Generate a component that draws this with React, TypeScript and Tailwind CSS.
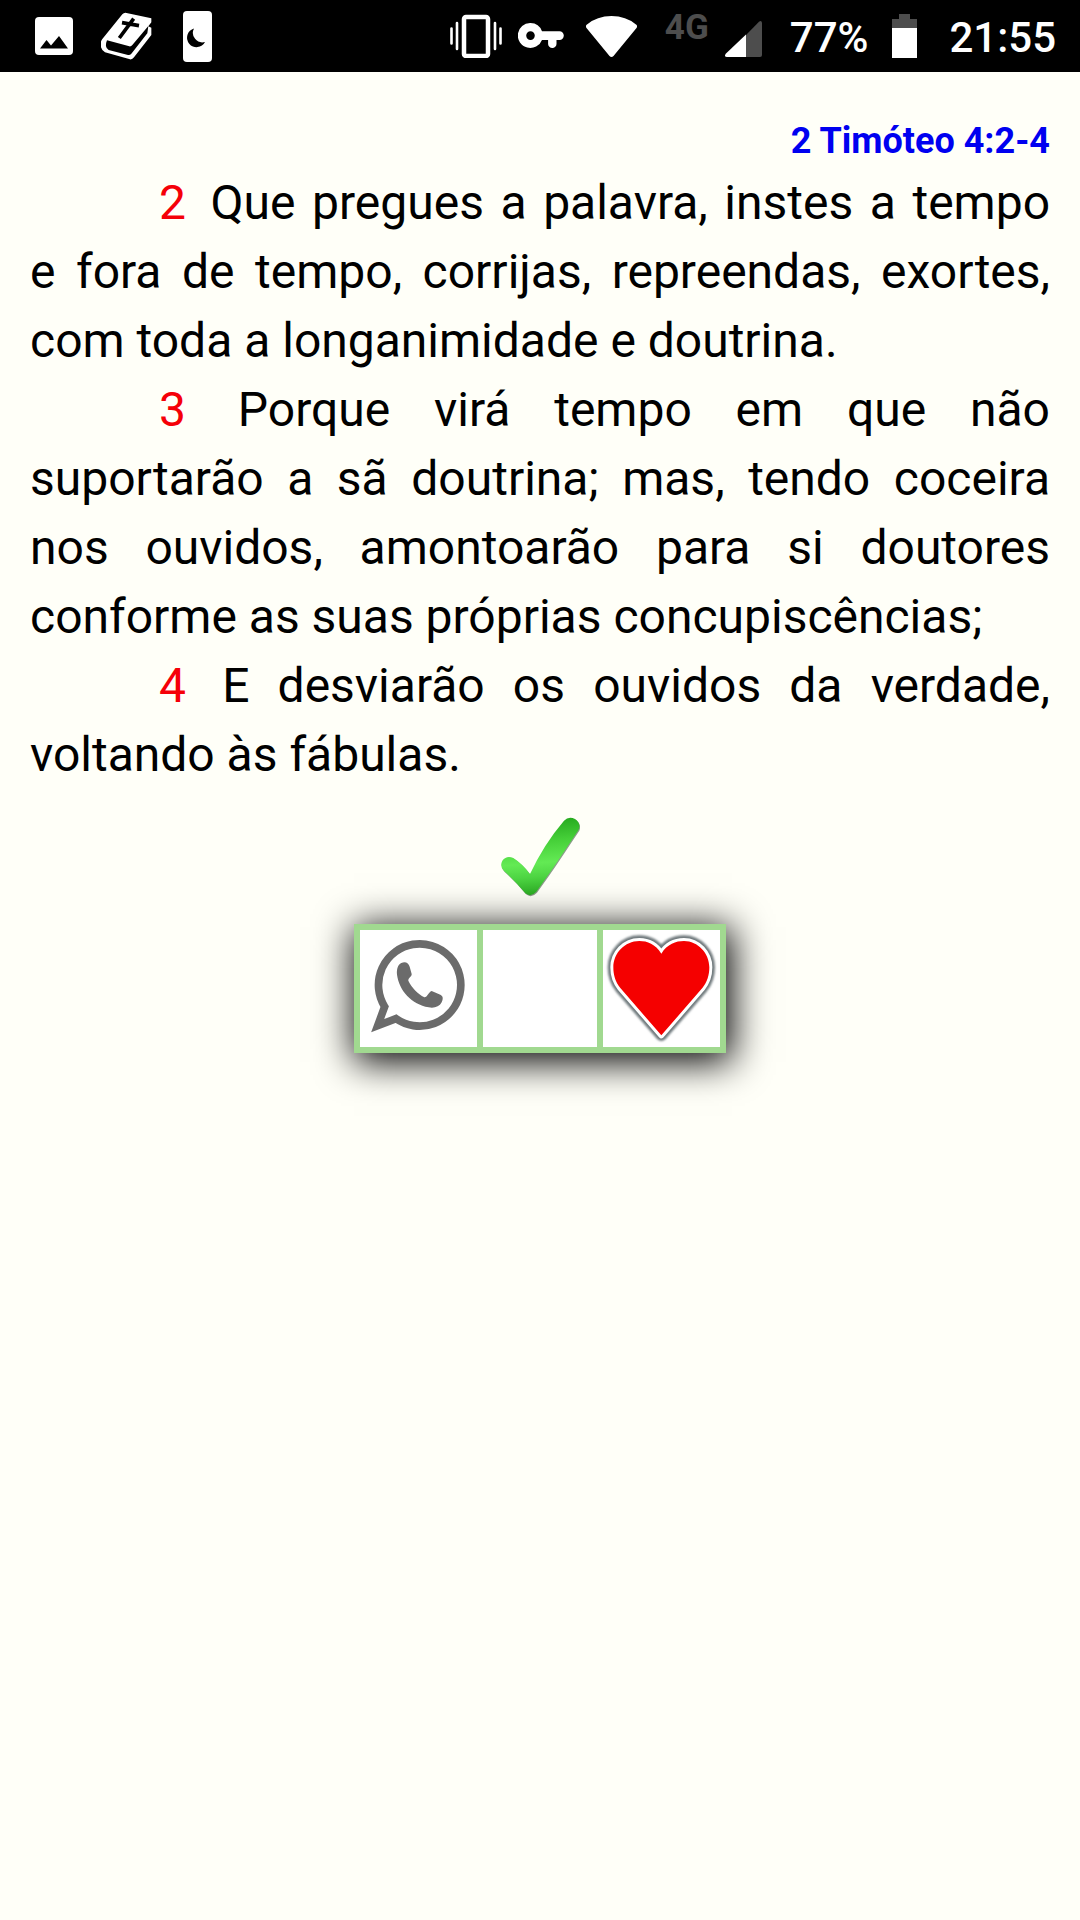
import type { ReactNode } from 'react';

const verses = [
  { number: 2, text: 'Que pregues a palavra, instes a tempo e fora de tempo, corrijas, repreendas, exortes, com toda a longanimidade e doutrina.' },
  { number: 3, text: 'Porque virá tempo em que não suportarão a sã doutrina; mas, tendo coceira nos ouvidos, amontoarão para si doutores conforme as suas próprias concupiscências;' },
  { number: 4, text: 'E desviarão os ouvidos da verdade, voltando às fábulas.' },
];

const PictureIcon = () => (
  <svg className="w-[38px] h-[38px]" viewBox="0 0 38 38">
    <rect width="38" height="38" rx="4" fill="#fff" />
    <path d="M5 31.5 11.5 23l4.5 5.5L24 19l9 12.5z" fill="#000" />
  </svg>
);

const BibleIcon = () => (
  <svg className="w-[54px] h-12" viewBox="302 36 162 144">
    <path
      d="M375 38l78 17v12l-9 12 9 4v22l-52 67q-5 7-12 6l-75-21q-14-9-13-26 0-8 5-14l60-74q4-5 9-5z"
      fill="#fff"
    />
    <path d="M320 121l67 18q5 1 9-4l48-57-3 22-48 61q-4 5-10 4l-58-15q-14-8-5-29z" fill="#000" />
    <path d="M400 56l-43 58M365 68l51 9" fill="none" stroke="#000" strokeWidth="11" />
  </svg>
);

const NightIcon = () => (
  <svg className="w-[29px] h-[51px]" viewBox="0 0 29 51">
    <rect width="29" height="51" rx="4" fill="#fff" />
    <path d="M11 17.5a9.5 9.5 0 1 0 11 13.5A9.5 9.5 0 0 1 11 17.5z" fill="#000" />
  </svg>
);

const VibrateIcon = () => (
  <svg className="w-[52px] h-11" viewBox="0 0 52 44" fill="none" stroke="#fff" strokeLinecap="round">
    <rect x="14" y="3" width="24" height="39" rx="2" strokeWidth="4.5" />
    <path d="M1.5 14.5v15M7 9v26M45 9v26M50.5 14.5v15" strokeWidth="2.6" />
  </svg>
);

const KeyIcon = () => (
  <svg className="w-[52px] h-[26px]" viewBox="0 0 52 26">
    <path
      d="M12.5 0a12.5 12.5 0 0 1 11.5 8.3h17.5a4.3 4.3 0 0 1 0 8.6h-3v4a4 4 0 0 1-8.4 0v-4H24A12.5 12.5 0 1 1 12.5 0zm0 8.3a4.3 4.3 0 1 0 0 8.6 4.3 4.3 0 0 0 0-8.6z"
      fill="#fff"
    />
  </svg>
);

const WifiIcon = () => (
  <svg className="w-[51px] h-[41px]" viewBox="0 0 51 41">
    <path d="M1 8.5Q11 0 25.5 0T50 8.5q2 1.5.5 3.5L27.5 40q-2 2-4 0L.5 12Q-1 10 1 8.5z" fill="#fff" />
  </svg>
);

const SignalIcon = () => (
  <svg className="w-[37px] h-9" viewBox="0 0 37 36">
    <path d="M34 .8q2.5-1.8 3 1V34q0 2-2 2H21V14z" fill="#4d4d4d" />
    <path d="M21 13.5V36H2q-3.5-.5-1-3.5z" fill="#fff" />
  </svg>
);

const BatteryIcon = () => (
  <svg className="w-[25px] h-11" viewBox="0 0 25 44">
    <path d="M7 0h11v5h7v9H0V5h7z" fill="#4d4d4d" />
    <path d="M0 14h25v30H0z" fill="#fff" />
  </svg>
);

const tick = 'M7 131q13-17 33-8 27 17 50 48 42-90 102-160 14-14 33-5 19 13 11 32-27 40-59 89-30 45-68 97-17 18-33 5-28-35-64-67-14-13-5-31z';

const CheckIcon = () => (
  <svg className="w-20 h-20" viewBox="0 0 240 240">
    <defs>
      <linearGradient id="check" gradientUnits="userSpaceOnUse" x1="120" y1="0" x2="140" y2="235">
        <stop offset="0" stopColor="#22a51c" />
        <stop offset=".3" stopColor="#45cf38" />
        <stop offset=".58" stopColor="#63ea54" />
        <stop offset=".75" stopColor="#4fd644" />
        <stop offset="1" stopColor="#28a820" />
      </linearGradient>
    </defs>
    <path d={tick} transform="translate(2 3)" fill="#8d9b8b" />
    <path d={tick} fill="url(#check)" />
  </svg>
);

const WhatsAppIcon = () => (
  <svg className="w-full h-full" viewBox="0 0 351 351">
    <path
      d="M74 230A123.5 123.5 0 1 1 108 266L53 287z"
      fill="none"
      stroke="#6b6b6b"
      strokeWidth="23"
    />
    <path
      d="M124 99c12-6 22 0 25 11l6 22c1 8-11 12-10 20 11 22 28 39 48 50 9 1 12-16 22-19l26 11c10 5 8 14 4 23-7 14-23 18-39 15-51-10-88-49-95-98-1-17 2-29 13-35z"
      fill="#6b6b6b"
    />
  </svg>
);

const heart = 'M175 71C157 42 133 33 109 33 65 33 31 70 31 112c0 24 7 45 21 62l123 142 123-142c14-17 21-38 21-62 0-42-34-79-76-79-24 0-50 9-68 38z';

const HeartIcon = () => (
  <svg className="w-full h-full" viewBox="0 0 351 351">
    <defs>
      <filter id="soft">
        <feGaussianBlur stdDeviation="3" />
      </filter>
    </defs>
    <path d={heart} fill="none" stroke="#6f797d" strokeWidth="34" strokeLinejoin="round" filter="url(#soft)" />
    <path d={heart} fill="#f50000" stroke="#fff" strokeWidth="18" strokeLinejoin="round" />
    <path d={heart} fill="#f50000" />
  </svg>
);

const StatusBar = () => (
  <header className="flex h-[72px] items-center justify-between bg-black pl-[35px] pr-6 text-white">
    <div className="flex items-center gap-7">
      <PictureIcon />
      <BibleIcon />
      <NightIcon />
    </div>
    <div className="flex items-center gap-4">
      <VibrateIcon />
      <KeyIcon />
      <WifiIcon />
      <span className="ml-3 mb-4 text-[35px] leading-8 font-bold text-[#4d4d4d]">4G</span>
      <span className="mt-1.5">
        <SignalIcon />
      </span>
      <span className="mt-1 ml-3 text-[42px] leading-[48px] font-medium">77%</span>
      <span className="mx-2">
        <BatteryIcon />
      </span>
      <time className="mt-1 ml-2 text-[42px] leading-[48px] font-medium">21:55</time>
    </div>
  </header>
);

const ShareButton = ({ label, children }: { label: string; children?: ReactNode }) => (
  <button type="button" aria-label={label} className="h-[117px] min-w-[114px] bg-white">
    {children}
  </button>
);

export default function App() {
  return (
    <div className="min-h-screen bg-[#fffff8] font-['Roboto',sans-serif] text-black">
      <StatusBar />
      <main className="px-[30px] pt-[42px]">
        <h1 className="text-right text-[36px] leading-[54px] font-bold text-[#0000f0]">2 Timóteo 4:2-4</h1>
        {verses.map((verse) => (
          <p key={verse.number} className="indent-[129px] text-justify text-5xl leading-[69px]">
            <span className="mr-2 text-[#f50008]">{verse.number}</span> {verse.text}
          </p>
        ))}
        <div className="flex flex-col items-center gap-[27px] pt-7">
          <button type="button" aria-label="Confirmar">
            <CheckIcon />
          </button>
          <div className="grid grid-cols-[117px_114px_117px] gap-1.5 border-6 border-[#a1d990] bg-[#a1d990] shadow-[3px_6px_36px_3px_#000]">
            <ShareButton label="WhatsApp">
              <WhatsAppIcon />
            </ShareButton>
            <ShareButton label="Compartilhar" />
            <ShareButton label="Favorito">
              <HeartIcon />
            </ShareButton>
          </div>
        </div>
      </main>
    </div>
  );
}
